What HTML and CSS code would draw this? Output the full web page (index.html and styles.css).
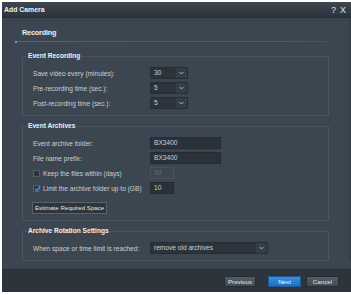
FILE: index.html
```html
<!DOCTYPE html>
<html>
<head>
<meta charset="utf-8">
<link rel="stylesheet" href="styles.css">
</head>
<body>
<div class="dialog">
  <div class="titlebar">
    <span class="title">Add Camera</span>
    <span class="tools"><span>?</span><span>X</span></span>
  </div>
  <div class="body">
    <div class="header">
      <div class="step">Recording</div>
      <div class="progress"><span class="dot"></span></div>
    </div>
    <div class="content">
      <fieldset class="group">
        <legend>Event Recording</legend>
        <div class="rows">
          <div class="row"><span class="label">Save video every (minutes):</span>
            <span class="select small"><span class="val">30</span><span class="arrow"><svg width="5" height="4" viewBox="0 0 5 4"><path d="M0.5 1 L2.5 3 L4.5 1" fill="none" stroke="#b8c0c8" stroke-width="0.9"/></svg></span></span></div>
          <div class="row"><span class="label">Pre-recording time (sec.):</span>
            <span class="select small"><span class="val">5</span><span class="arrow"><svg width="5" height="4" viewBox="0 0 5 4"><path d="M0.5 1 L2.5 3 L4.5 1" fill="none" stroke="#b8c0c8" stroke-width="0.9"/></svg></span></span></div>
          <div class="row"><span class="label">Post-recording time (sec.):</span>
            <span class="select small"><span class="val">5</span><span class="arrow"><svg width="5" height="4" viewBox="0 0 5 4"><path d="M0.5 1 L2.5 3 L4.5 1" fill="none" stroke="#b8c0c8" stroke-width="0.9"/></svg></span></span></div>
        </div>
      </fieldset>
      <fieldset class="group">
        <legend>Event Archives</legend>
        <div class="rows">
          <div class="row"><span class="label">Event archive folder:</span><span class="input wide">BX3400</span></div>
          <div class="row"><span class="label">File name prefix:</span><span class="input wide">BX3400</span></div>
          <div class="row"><span class="label check"><span class="box"></span>Keep the files within (days)</span><span class="input short disabled">30</span></div>
          <div class="row"><span class="label check"><span class="box checked"><svg width="7" height="7" viewBox="0 0 7 7"><path d="M1 3.6 L2.8 5.6 L6.2 0.8" fill="none" stroke="#4a95e0" stroke-width="1.3"/></svg></span>Limit the archive folder up to (GB)</span><span class="input short">10</span></div>
          <div class="btnrow"><span class="estimate">Estimate Required Space</span></div>
        </div>
      </fieldset>
      <fieldset class="group">
        <legend>Archive Rotation Settings</legend>
        <div class="rows">
          <div class="row"><span class="label">When space or time limit is reached:</span>
            <span class="select long"><span class="val">remove old archives</span><span class="arrow"><svg width="5" height="4" viewBox="0 0 5 4"><path d="M0.5 1 L2.5 3 L4.5 1" fill="none" stroke="#b8c0c8" stroke-width="0.9"/></svg></span></span></div>
        </div>
      </fieldset>
    </div>
  </div>
  <div class="footer">
    <span class="btn">Previous</span>
    <span class="btn primary">Next</span>
    <span class="btn">Cancel</span>
  </div>
</div>
</body>
</html>
```
FILE: styles.css
```css
html, body {
  margin: 0;
  padding: 0;
  background: #ffffff;
}
body {
  width: 351px;
  height: 295px;
  font-family: "Liberation Sans", Arial, sans-serif;
  font-size: 6.6px;
  color: #c9d0d6;
}
.dialog {
  margin: 2px 0 0 2px;
  width: 349px;
  height: 290px;
  display: flex;
  flex-direction: column;
  background: #3c4650;
}
.titlebar {
  height: 16px;
  flex: none;
  display: flex;
  align-items: center;
  justify-content: space-between;
  padding: 0 5px 0 2px;
  background: linear-gradient(#3d4750, #2c343c);
  border-bottom: 1px solid #262d34;
  box-sizing: border-box;
}
.title {
  font-weight: bold;
  font-size: 6.9px;
  color: #eef1f3;
}
.tools {
  display: flex;
  gap: 4px;
  font-size: 9px;
  color: #dfe4e8;
}
.body {
  flex: 1;
  display: flex;
  flex-direction: column;
  padding-right: 3px;
  border-right: 2px solid #353e47;
}
.header {
  height: 33px;
  flex: none;
  display: flex;
  flex-direction: column;
}
.step {
  margin: 10px 0 0 20px;
  height: 10px;
  line-height: 10px;
  font-size: 7.3px;
  font-weight: bold;
  color: #eef1f3;
  letter-spacing: -0.2px;
}
.progress {
  margin: 3px 0 0 13px;
  width: 313px;
  height: 1px;
  background: linear-gradient(90deg, #3f6690 0%, #3b5f86 85%, #48566a 92%, #44505c 100%);
  display: flex;
  align-items: center;
}
.dot {
  width: 2px;
  height: 2px;
  background: #7fb4ea;
  border-radius: 1px;
}
.content {
  display: flex;
  flex-direction: column;
  gap: 5px;
  padding-left: 20px;
  width: 307px;
}
.group {
  margin: 0;
  padding: 6px 0 6px 0;
  border: 1px solid #4b555f;
  min-width: 0;
}
.group legend {
  margin-left: 4px;
  padding: 0 1px;
  line-height: 10px;
  font-weight: bold;
  color: #eef1f3;
  font-size: 6.6px;
}
.rows {
  padding-left: 10px;
  display: flex;
  flex-direction: column;
  gap: 3px;
}
.row {
  height: 12px;
  display: flex;
  align-items: center;
}
.label {
  width: 117px;
  flex: none;
  white-space: nowrap;
  display: flex;
  align-items: center;
}
.label.check {
  gap: 3px;
}
.box {
  width: 7px;
  height: 7px;
  box-sizing: border-box;
  border: 1px solid #555e68;
  background: #2c333b;
  display: flex;
  align-items: center;
  justify-content: center;
  position: relative;
}
.box.checked svg {
  position: absolute;
  left: 0;
  top: -1px;
}
.select {
  height: 12px;
  box-sizing: border-box;
  display: flex;
  background: #2b333b;
  border: 1px solid #252c33;
  color: #c9d0d6;
}
.select.small { width: 38px; }
.select.long { width: 118px; }
.select .val {
  flex: 1;
  padding-left: 3px;
  line-height: 10px;
}
.select .arrow {
  width: 11px;
  background: #353e47;
  border-left: 1px solid #2a3139;
  display: flex;
  align-items: center;
  justify-content: center;
}
.input {
  height: 12px;
  box-sizing: border-box;
  background: #2a3139;
  border: 1px solid #242b32;
  padding-left: 3px;
  line-height: 10px;
  color: #c9d0d6;
}
.input.wide { width: 71px; }
.input.short { width: 24px; }
.input.disabled {
  background: #3c4650;
  border-color: #4a535d;
  color: #68727c;
}
.btnrow {
  margin-top: 5px;
  height: 12px;
  display: flex;
}
.estimate {
  height: 12px;
  box-sizing: border-box;
  padding: 0 2px;
  margin-left: -1px;
  line-height: 10px;
  border: 1px solid #59626c;
  background: #2d353d;
  color: #e3e7ea;
  font-size: 6.1px;
}
.footer {
  height: 23px;
  flex: none;
  margin-top: 8px;
  background: #2d343c;
  border-top: 1px solid #262c33;
  box-sizing: border-box;
  display: flex;
  align-items: center;
  justify-content: flex-end;
  padding: 0 12px 0 0;
  gap: 5px;
}
.btn {
  height: 11px;
  width: 33px;
  box-sizing: border-box;
  line-height: 9px;
  text-align: center;
  font-size: 6.2px;
  color: #e3e7ea;
  background: linear-gradient(#535c65, #434b54);
  border: 1px solid #262c33;
}
.btn:first-child {
  width: 32px;
  margin-right: 7px;
}
.btn.primary {
  background: linear-gradient(#3590e2, #1f6fc0);
  border-color: #1d5a96;
  color: #ffffff;
}
```
